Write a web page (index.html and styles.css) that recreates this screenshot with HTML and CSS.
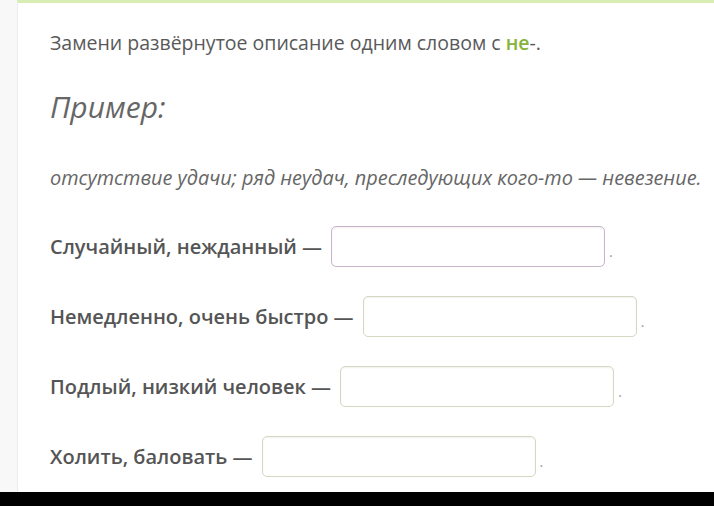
FILE: index.html
```html
<!DOCTYPE html>
<html lang="ru">
<head>
<meta charset="utf-8">
<link rel="stylesheet" href="styles.css">
</head>
<body>
<div class="page">
  <div class="card">
    <p class="task">Замени развёрнутое описание одним словом с <span class="ne">не</span>-.</p>
    <h2 class="example-title">Пример:</h2>
    <p class="example">отсутствие удачи; ряд неудач, преследующих кого-то — невезение.</p>
    <div class="row first"><span class="label">Случайный, нежданный —</span><span class="field focused"></span><span class="dot">.</span></div>
    <div class="row"><span class="label">Немедленно, очень быстро —</span><span class="field"></span><span class="dot">.</span></div>
    <div class="row"><span class="label">Подлый, низкий человек —</span><span class="field"></span><span class="dot">.</span></div>
    <div class="row"><span class="label">Холить, баловать —</span><span class="field"></span><span class="dot">.</span></div>
  </div>
  <div class="bottom-bar"></div>
</div>
</body>
</html>
```

FILE: styles.css
```css
html, body {
  margin: 0;
  padding: 0;
  background: #f8f8f8;
}
.page {
  width: 714px;
  height: 506px;
  overflow: hidden;
  display: flex;
  flex-direction: column;
  font-family: "Open Sans", "Noto Sans", sans-serif;
}
.card {
  flex: 1;
  margin-left: 17px;
  background: #fff;
  border-left: 1px solid #ececec;
  border-top: 3px solid #d8edb4;
  padding: 27px 0 0 32px;
  display: flex;
  flex-direction: column;
  overflow: hidden;
}
.task {
  margin: 0;
  font-size: 19.5px;
  line-height: 26px;
  color: #595959;
  white-space: nowrap;
}
.ne {
  color: #86b33a;
  font-weight: 600;
}
.example-title {
  margin: 32px 0 0 0;
  font-size: 30px;
  line-height: 38px;
  font-style: italic;
  font-weight: 400;
  color: #666;
}
.example {
  margin: 39px 0 0 0;
  font-size: 19.9px;
  line-height: 26px;
  font-style: italic;
  color: #666;
  white-space: nowrap;
}
.row {
  display: flex;
  align-items: center;
  height: 41px;
  margin-top: 29px;
}
.row.first { margin-top: 35px; }
.label {
  font-size: 20px;
  font-weight: 600;
  color: #555;
  white-space: nowrap;
}
.field {
  flex: none;
  width: 272px;
  height: 39px;
  margin-left: 9px;
  border: 1px solid #d6d6c2;
  border-radius: 5px;
  background: #fff;
  box-shadow: inset 0 1px 2px rgba(0,0,0,0.06);
}
.field.focused {
  border-color: #c9b4c9;
}
.dot {
  margin-left: 4px;
  margin-top: 10px;
  font-size: 14px;
  color: #999;
}
.bottom-bar {
  height: 14px;
  background: #000;
  flex: none;
}
```
